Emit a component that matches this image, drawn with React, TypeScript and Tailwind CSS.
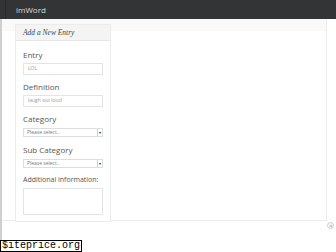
export default function App() {
  const labelCls = 'text-[8px] leading-[12px] text-[#555]'
  const inputCls = 'h-[12px] w-[80px] border border-[#e4e4e4] bg-white px-[4px] flex items-center text-[5px] text-[#999]'
  const selectCls = 'h-[9px] w-[80px] border border-[#ddd] bg-white flex items-center justify-between text-[5px] text-[#777]'

  return (
    <div className="w-[336px] h-[252px] bg-white overflow-hidden relative" style={{ fontFamily: '"Open Sans", sans-serif' }}>
      <div className="h-[19px] bg-[#333436] flex items-center">
        <div className="w-[6px] h-full border-r border-[#2a2a2b]" />
        <span className="ml-[10px] text-[8px] text-[#dcdcdc]">imWord</span>
      </div>

      <div className="flex border-l-2 border-[#cfcfcf] h-[225px]">
        <div className="w-[325px] h-[202px] border-r border-b border-[#ececec] bg-[linear-gradient(#f9f9f9_12px,white_12px)] pl-[13px] pt-[5px]">
          <div className="w-[96px] border border-[#ececec] bg-white">
            <div className="h-[16px] bg-[#f4f4f4] border-b border-[#e6e6e6] flex items-center px-[7px]">
              <span className="text-[7.5px] italic text-[#444]" style={{ fontFamily: '"Liberation Serif", serif' }}>Add a New Entry</span>
            </div>
            <div className="px-[7px] pt-[8px] pb-[6px] flex flex-col">
              <span className={labelCls}>Entry</span>
              <div className={`${inputCls} mt-[2px]`}>LOL</div>
              <span className={`${labelCls} mt-[6px]`}>Definition</span>
              <div className={`${inputCls} mt-[2px]`}>laugh out loud</div>
              <span className={`${labelCls} mt-[6px]`}>Category</span>
              <div className={`${selectCls} mt-[3px]`}>
                <span className="pl-[3px]">Please select..</span>
                <span className="w-[5px] h-full border-l border-[#ccc] flex items-center justify-center text-[4px] text-[#222]">▾</span>
              </div>
              <span className={`${labelCls} mt-[7px]`}>Sub Category</span>
              <div className={`${selectCls} mt-[3px]`}>
                <span className="pl-[3px]">Please select..</span>
                <span className="w-[5px] h-full border-l border-[#ccc] flex items-center justify-center text-[4px] text-[#222]">▾</span>
              </div>
              <span className="text-[7px] leading-[12px] text-[#555] mt-[6px]">Additional information:</span>
              <div className="h-[27px] w-[80px] border border-[#e4e4e4] mt-[2px]" />
            </div>
          </div>
        </div>
      </div>

      <div className="absolute left-[327px] top-[222px] w-[7px] h-[7px] rounded-full border border-[#cfcfcf] bg-[#f4f4f4] flex items-center justify-center">
        <div className="w-[2px] h-[2px] rounded-full bg-[#bbb]" />
      </div>

      <div className="absolute left-0 bottom-0 h-[12px] px-[1px] border border-black bg-white text-[10px] leading-[10px] text-black" style={{ fontFamily: '"Liberation Mono", monospace' }}>
        $iteprice.org
      </div>
    </div>
  )
}
